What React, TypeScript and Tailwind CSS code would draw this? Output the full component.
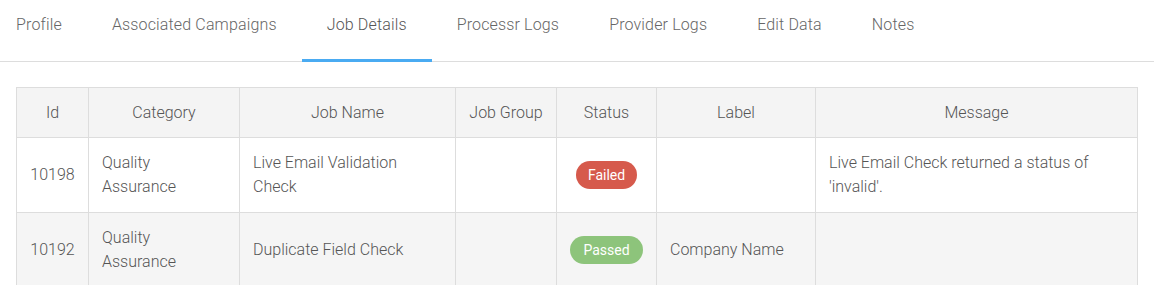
const tabs = [
  "Profile",
  "Associated Campaigns",
  "Job Details",
  "Processr Logs",
  "Provider Logs",
  "Edit Data",
  "Notes",
];

type Row = {
  id: string;
  category: string;
  jobName: string;
  jobGroup: string;
  status: "Failed" | "Passed";
  label: string;
  message: string;
};

const rows: Row[] = [
  {
    id: "10198",
    category: "Quality Assurance",
    jobName: "Live Email Validation Check",
    jobGroup: "",
    status: "Failed",
    label: "",
    message: "Live Email Check returned a status of 'invalid'.",
  },
  {
    id: "10192",
    category: "Quality Assurance",
    jobName: "Duplicate Field Check",
    jobGroup: "",
    status: "Passed",
    label: "Company Name",
    message: "",
  },
];

const StatusBadge = ({ status }: { status: Row["status"] }) => (
  <span
    className={
      status === "Failed"
        ? "inline-flex h-7 items-center rounded-full bg-[#d65a4c] px-3 text-[14px] font-normal text-white"
        : "inline-flex h-7 items-center rounded-full bg-[#8dc47b] px-[13px] text-[14px] font-normal text-white"
    }
  >
    {status}
  </span>
);

export default function App() {
  return (
    <div className="min-h-screen bg-white font-['Roboto',sans-serif] text-[16px] font-light leading-6 text-[#555]">
      {/* tab strip */}
      <div className="flex h-[62px] border-b border-[#ddd] tracking-[0.15px]">
        {tabs.map((tab, i) => (
          <div
            key={tab}
            className={
              (i === 0 ? "pl-4 pr-[25px] " : "px-[25px] ") +
              (tab === "Job Details"
                ? "-mb-px h-[62px] border-b-[3px] border-[#4aabf2] pt-[13px] text-[#555]"
                : "h-[61px] pt-[13px] text-[#666]")
            }
          >
            {tab}
          </div>
        ))}
      </div>

      <div className="mx-4 mt-[25px]">
        <table className="w-full border-collapse border border-[#ddd]">
          <thead>
            <tr className="h-[50px] bg-[#f4f4f4]">
              <th className="w-[72px] border border-[#ddd] px-[13px] font-light">Id</th>
              <th className="w-[151px] border border-[#ddd] px-[13px] font-light">Category</th>
              <th className="w-[216px] border border-[#ddd] px-[13px] font-light">Job Name</th>
              <th className="w-[101px] border border-[#ddd] px-[13px] font-light">Job Group</th>
              <th className="w-[100px] border border-[#ddd] px-[13px] font-light">Status</th>
              <th className="w-[159px] border border-[#ddd] px-[13px] font-light">Label</th>
              <th className="border border-[#ddd] px-[13px] font-light">Message</th>
            </tr>
          </thead>
          <tbody>
            {rows.map((row, i) => (
              <tr key={row.id} className={i % 2 === 1 ? "bg-[#f5f5f5]" : "bg-white"}>
                <td className="border border-[#ddd] px-[13px] py-[13px] text-center">{row.id}</td>
                <td className="border border-[#ddd] px-[13px] py-[13px]">{row.category}</td>
                <td className="border border-[#ddd] px-[13px] py-[13px]">{row.jobName}</td>
                <td className="border border-[#ddd] px-[13px] py-[13px]">{row.jobGroup}</td>
                <td className="border border-[#ddd] px-[13px] py-[13px] text-center">
                  <StatusBadge status={row.status} />
                </td>
                <td className="border border-[#ddd] px-[13px] py-[13px]">{row.label}</td>
                <td className="border border-[#ddd] px-[13px] py-[13px]">{row.message}</td>
              </tr>
            ))}
          </tbody>
        </table>
      </div>
    </div>
  );
}
